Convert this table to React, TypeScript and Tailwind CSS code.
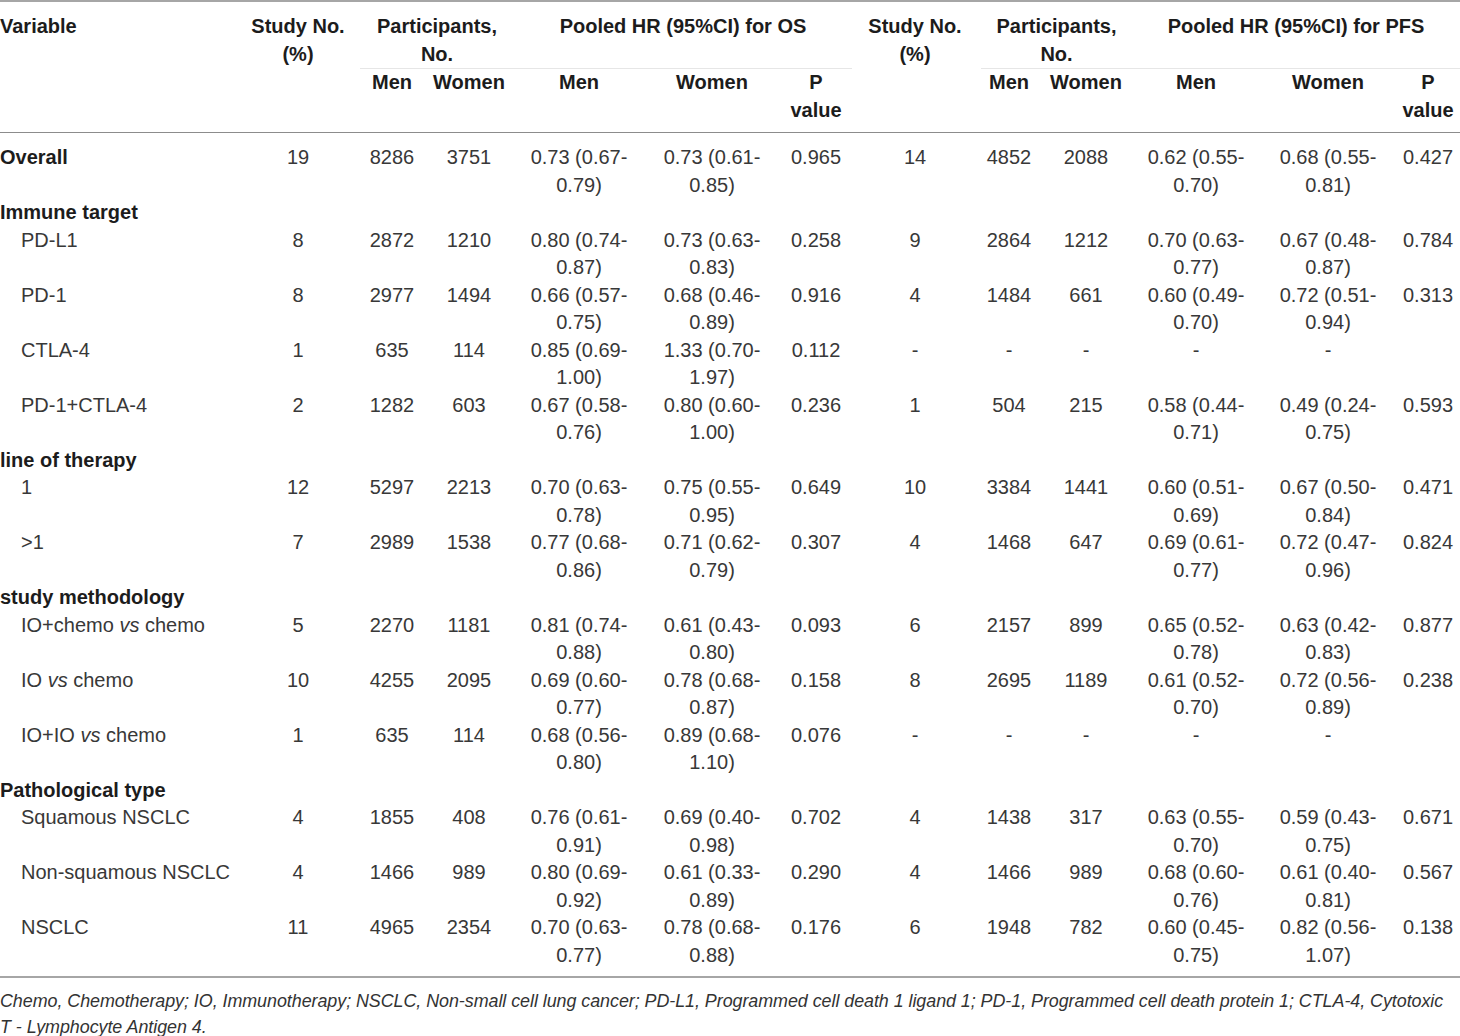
import React from 'react';

type Row =
  | { kind: 'group'; label: string }
  | {
      kind: 'data';
      label: React.ReactNode;
      bold?: boolean;
      os: [string, string, string, string, string, string];
      pfs: [string, string, string, string, string, string];
    };

const cols =
  'grid grid-cols-[236px_124px_64px_90px_130px_136px_72px_126px_62px_92px_128px_136px_64px]';

const vs = (a: string, b: string) => (
  <>
    {a} <i>vs</i> {b}
  </>
);

const rows: Row[] = [
  {
    kind: 'data',
    label: 'Overall',
    bold: true,
    os: ['19', '8286', '3751', '0.73 (0.67-0.79)', '0.73 (0.61-0.85)', '0.965'],
    pfs: ['14', '4852', '2088', '0.62 (0.55-0.70)', '0.68 (0.55-0.81)', '0.427'],
  },
  { kind: 'group', label: 'Immune target' },
  {
    kind: 'data',
    label: 'PD-L1',
    os: ['8', '2872', '1210', '0.80 (0.74-0.87)', '0.73 (0.63-0.83)', '0.258'],
    pfs: ['9', '2864', '1212', '0.70 (0.63-0.77)', '0.67 (0.48-0.87)', '0.784'],
  },
  {
    kind: 'data',
    label: 'PD-1',
    os: ['8', '2977', '1494', '0.66 (0.57-0.75)', '0.68 (0.46-0.89)', '0.916'],
    pfs: ['4', '1484', '661', '0.60 (0.49-0.70)', '0.72 (0.51-0.94)', '0.313'],
  },
  {
    kind: 'data',
    label: 'CTLA-4',
    os: ['1', '635', '114', '0.85 (0.69-1.00)', '1.33 (0.70-1.97)', '0.112'],
    pfs: ['-', '-', '-', '-', '-', ''],
  },
  {
    kind: 'data',
    label: 'PD-1+CTLA-4',
    os: ['2', '1282', '603', '0.67 (0.58-0.76)', '0.80 (0.60-1.00)', '0.236'],
    pfs: ['1', '504', '215', '0.58 (0.44-0.71)', '0.49 (0.24-0.75)', '0.593'],
  },
  { kind: 'group', label: 'line of therapy' },
  {
    kind: 'data',
    label: '1',
    os: ['12', '5297', '2213', '0.70 (0.63-0.78)', '0.75 (0.55-0.95)', '0.649'],
    pfs: ['10', '3384', '1441', '0.60 (0.51-0.69)', '0.67 (0.50-0.84)', '0.471'],
  },
  {
    kind: 'data',
    label: '>1',
    os: ['7', '2989', '1538', '0.77 (0.68-0.86)', '0.71 (0.62-0.79)', '0.307'],
    pfs: ['4', '1468', '647', '0.69 (0.61-0.77)', '0.72 (0.47-0.96)', '0.824'],
  },
  { kind: 'group', label: 'study methodology' },
  {
    kind: 'data',
    label: vs('IO+chemo', 'chemo'),
    os: ['5', '2270', '1181', '0.81 (0.74-0.88)', '0.61 (0.43-0.80)', '0.093'],
    pfs: ['6', '2157', '899', '0.65 (0.52-0.78)', '0.63 (0.42-0.83)', '0.877'],
  },
  {
    kind: 'data',
    label: vs('IO', 'chemo'),
    os: ['10', '4255', '2095', '0.69 (0.60-0.77)', '0.78 (0.68-0.87)', '0.158'],
    pfs: ['8', '2695', '1189', '0.61 (0.52-0.70)', '0.72 (0.56-0.89)', '0.238'],
  },
  {
    kind: 'data',
    label: vs('IO+IO', 'chemo'),
    os: ['1', '635', '114', '0.68 (0.56-0.80)', '0.89 (0.68-1.10)', '0.076'],
    pfs: ['-', '-', '-', '-', '-', ''],
  },
  { kind: 'group', label: 'Pathological type' },
  {
    kind: 'data',
    label: 'Squamous NSCLC',
    os: ['4', '1855', '408', '0.76 (0.61-0.91)', '0.69 (0.40-0.98)', '0.702'],
    pfs: ['4', '1438', '317', '0.63 (0.55-0.70)', '0.59 (0.43-0.75)', '0.671'],
  },
  {
    kind: 'data',
    label: 'Non-squamous NSCLC',
    os: ['4', '1466', '989', '0.80 (0.69-0.92)', '0.61 (0.33-0.89)', '0.290'],
    pfs: ['4', '1466', '989', '0.68 (0.60-0.76)', '0.61 (0.40-0.81)', '0.567'],
  },
  {
    kind: 'data',
    label: 'NSCLC',
    os: ['11', '4965', '2354', '0.70 (0.63-0.77)', '0.78 (0.68-0.88)', '0.176'],
    pfs: ['6', '1948', '782', '0.60 (0.45-0.75)', '0.82 (0.56-1.07)', '0.138'],
  },
];

// hazard ratios wrap after the hyphen inside the bracket
const Hr = ({ value }: { value: string }) => {
  const cut = value.lastIndexOf('-');
  if (cut <= 0) return <>{value}</>;
  return (
    <>
      {value.slice(0, cut + 1)}
      <br />
      {value.slice(cut + 1)}
    </>
  );
};

const Cells = ({ vals }: { vals: string[] }) => (
  <>
    <div className="text-center">{vals[0]}</div>
    <div className="text-center">{vals[1]}</div>
    <div className="text-center">{vals[2]}</div>
    <div className="text-center">
      <Hr value={vals[3]} />
    </div>
    <div className="text-center">
      <Hr value={vals[4]} />
    </div>
    <div className="text-center">{vals[5]}</div>
  </>
);

const HeaderHalf = ({ kind }: { kind: string }) => (
  <>
    <div className="row-span-2 text-center">
      Study No.
      <br />
      (%)
    </div>
    <div className={`col-span-2 border-b border-[#e6e6e6] text-center ${kind === 'PFS' ? 'ml-[3px]' : ''}`}>
      Participants,
      <br />
      No.
    </div>
    <div className="col-span-3 border-b border-[#e6e6e6] text-center">Pooled HR (95%CI) for {kind}</div>
  </>
);

export default function App() {
  return (
    <div className="w-[1460px] bg-white font-['Liberation_Sans',Arial,sans-serif] text-[20px] leading-[27.5px] text-[#383838]">
      <div className="border-t-2 border-[#a6a6a6]">
        <div className={`${cols} border-b border-[#8c8c8c] pt-[11px] pb-[8px] font-bold text-[#1c1c1c]`}>
          <div className="row-span-2">Variable</div>
          <HeaderHalf kind="OS" />
          <HeaderHalf kind="PFS" />
          <div className="text-center">Men</div>
          <div className="text-center">Women</div>
          <div className="text-center">Men</div>
          <div className="text-center">Women</div>
          <div className="text-center">
            P<br />
            value
          </div>
          <div className="text-center">Men</div>
          <div className="text-center">Women</div>
          <div className="text-center">Men</div>
          <div className="text-center">Women</div>
          <div className="text-center">
            P<br />
            value
          </div>
        </div>

        <div className="border-b-2 border-[#a6a6a6] pt-[11px] pb-[7px]">
          {rows.map((row, i) =>
            row.kind === 'group' ? (
              <div key={i} className="font-bold text-[#1c1c1c]">
                {row.label}
              </div>
            ) : (
              <div key={i} className={cols}>
                <div className={row.bold ? 'font-bold text-[#1c1c1c]' : 'pl-[21px]'}>{row.label}</div>
                <Cells vals={row.os} />
                <Cells vals={row.pfs} />
              </div>
            ),
          )}
        </div>

        <div className="overflow-hidden pt-[10px] text-[#333]">
          <p className="whitespace-nowrap text-[17.9px] italic leading-[26px] tracking-[-0.05px]">
            Chemo, Chemotherapy; IO, Immunotherapy; NSCLC, Non-small cell lung cancer; PD-L1, Programmed cell
            death 1 ligand 1; PD-1, Programmed cell death protein 1; CTLA-4, Cytotoxic
            <br />T - Lymphocyte Antigen 4.
          </p>
        </div>
      </div>
    </div>
  );
}
